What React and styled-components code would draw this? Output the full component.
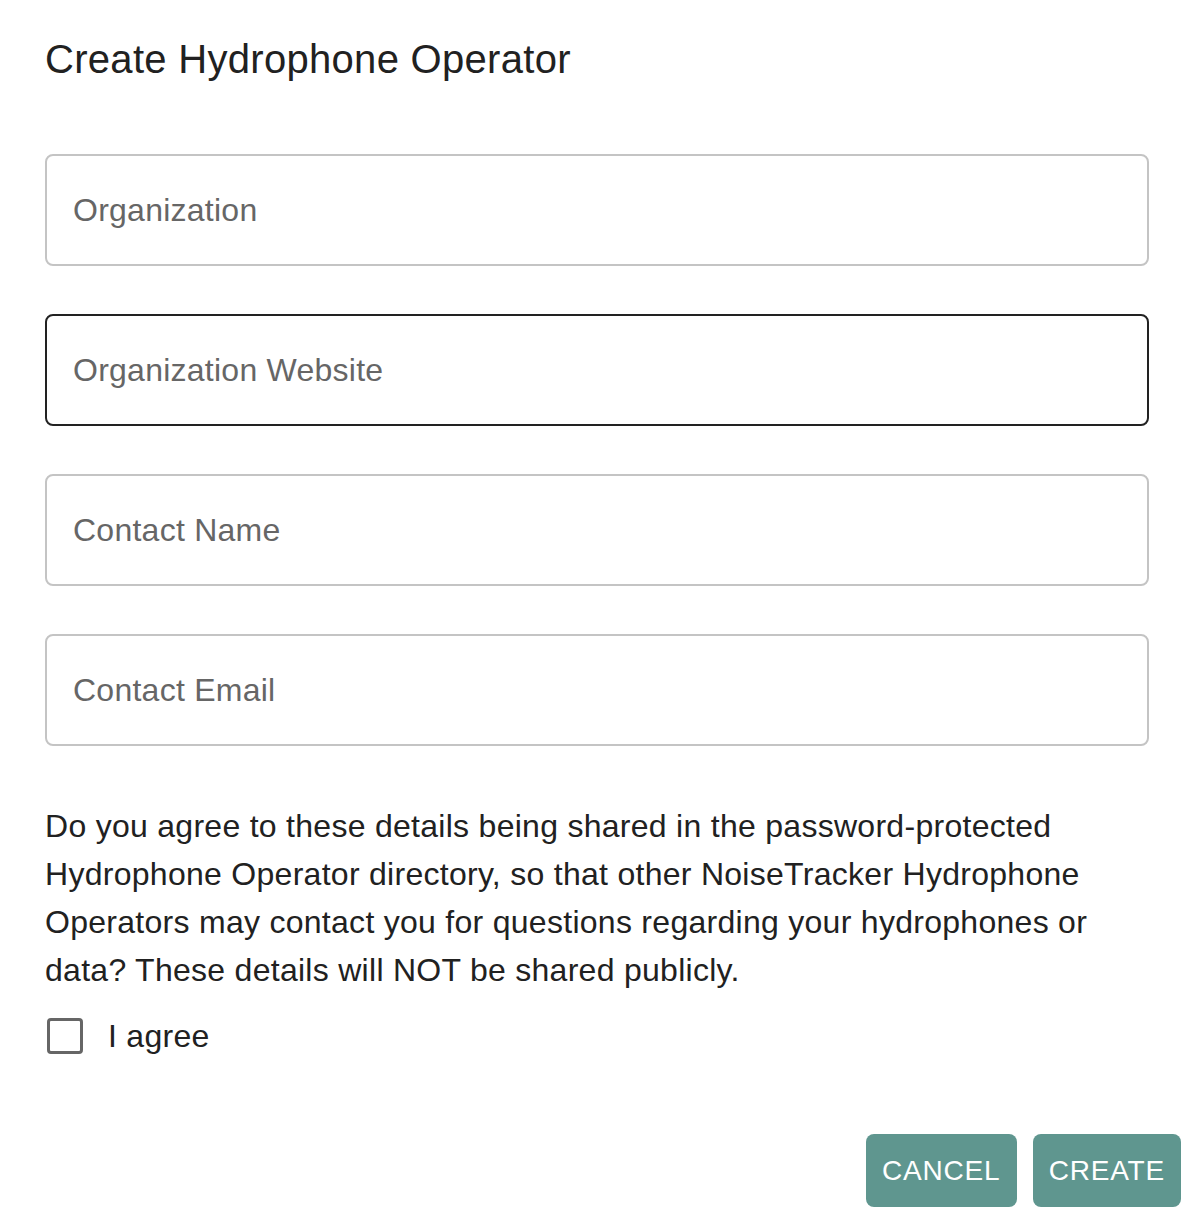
import React from 'react'
import styled, { createGlobalStyle } from 'styled-components'

const GlobalStyle = createGlobalStyle`
  html, body {
    margin: 0;
    padding: 0;
    background: #ffffff;
  }
  body {
    font-family: 'Liberation Sans', Arial, Helvetica, sans-serif;
    color: #212121;
  }
  * {
    box-sizing: border-box;
  }
`

const Dialog = styled.div`
  width: 1192px;
  padding: 0 0 15px 45px;
  display: flex;
  flex-direction: column;
`

const Title = styled.h2`
  margin: 0;
  padding-top: 27px;
  font-size: 40px;
  line-height: 64px;
  font-weight: 400;
  letter-spacing: 0.3px;
  color: #212121;
`

const Fields = styled.div`
  margin-top: 63px;
  margin-right: 43px;
  display: flex;
  flex-direction: column;
  gap: 48px;
`

const Field = styled.input`
  display: block;
  width: 100%;
  height: 112px;
  padding: 0 26px;
  border: 2px solid ${p => (p.$active ? '#222222' : '#c4c4c4')};
  border-radius: 8px;
  font-family: inherit;
  font-size: 32px;
  letter-spacing: 0.25px;
  color: #212121;
  background: #fff;
  outline: none;
  &::placeholder {
    color: #666666;
    opacity: 1;
  }
`

const Notice = styled.p`
  margin: 56px 43px 0 0;
  font-size: 32px;
  line-height: 48px;
  letter-spacing: 0.28px;
  color: #212121;
`

const CheckRow = styled.label`
  height: 84px;
  display: flex;
  align-items: center;
  gap: 25px;
  font-size: 32px;
  letter-spacing: 0.28px;
  color: #212121;
  cursor: pointer;
`

const Box = styled.span`
  width: 36px;
  height: 36px;
  margin-left: 2px;
  border: 3px solid #666666;
  border-radius: 4px;
  background: #fff;
`

const Actions = styled.div`
  margin-top: 56px;
  padding-right: 11px;
  display: flex;
  justify-content: flex-end;
  gap: 16px;
`

const Button = styled.button`
  height: 73px;
  min-width: ${p => p.$width}px;
  padding: 0 16px;
  border: none;
  border-radius: 8px;
  background: #5f968f;
  color: #ffffff;
  font-family: inherit;
  font-size: 28px;
  letter-spacing: 0.8px;
  text-transform: uppercase;
  cursor: pointer;
`

const fields = [
  { id: 0, label: 'Organization' },
  { id: 1, label: 'Organization Website', active: true },
  { id: 2, label: 'Contact Name' },
  { id: 3, label: 'Contact Email' },
]

const App = () => {
  return (
    <>
      <GlobalStyle />
      <Dialog>
        <Title>Create Hydrophone Operator</Title>
        <Fields>
          {fields.map(item => (
            <Field key={item.id} placeholder={item.label} $active={item.active} />
          ))}
        </Fields>
        <Notice>
          Do you agree to these details being shared in the password-protected
          Hydrophone Operator directory, so that other NoiseTracker Hydrophone
          Operators may contact you for questions regarding your hydrophones or
          data? These details will NOT be shared publicly.
        </Notice>
        <CheckRow>
          <Box />
          I agree
        </CheckRow>
        <Actions>
          <Button $width={151}>Cancel</Button>
          <Button $width={148}>Create</Button>
        </Actions>
      </Dialog>
    </>
  )
}

export default App
